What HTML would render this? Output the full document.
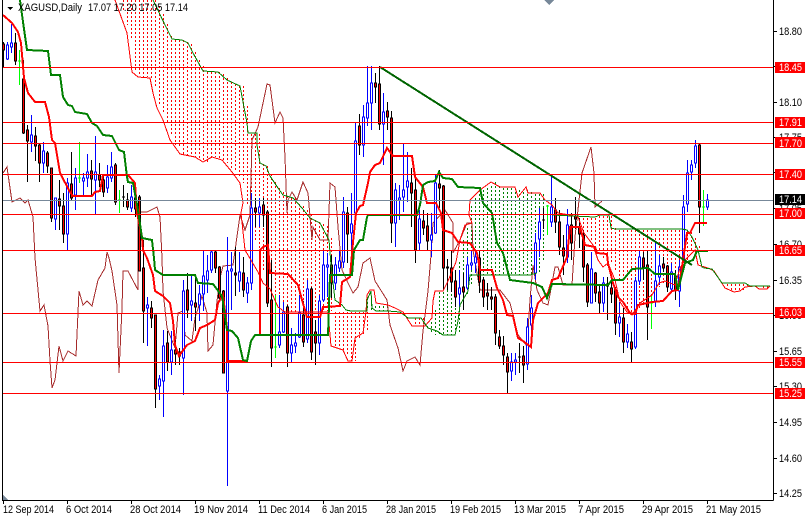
<!DOCTYPE html>
<html>
<head>
<meta charset="utf-8">
<title>XAGUSD Daily</title>
<style>
html,body{margin:0;padding:0;background:#fff;width:807px;height:518px;overflow:hidden}
svg{display:block}
text{font-family:"Liberation Sans",sans-serif;font-size:11px;fill:#000}
.w text,text.w{fill:#fff}
</style>
</head>
<body>
<svg width="807" height="518" viewBox="0 0 807 518" xmlns="http://www.w3.org/2000/svg" shape-rendering="crispEdges">
<rect width="807" height="518" fill="#fff"/>
<!-- cloud dashes -->
<g transform="translate(3.5,0)" fill="none" stroke-width="1" stroke-dasharray="2 2">
<path stroke="#f00" d="M120 0V12M124 0V25M128 0V40M132 0V72M136 0V76M140 0V77M144 0V77M148 0V78M152 0V88M156 6V105M160 14V114M164 24V122M168 36V134M172 40V145M176 40V148M180 40V154M184 42V155M188 44V155M192 52V157M196 60V158M200 66V160M204 72V162M208 72V160M212 72V157M216 72V158M220 74V160M224 78V163M228 82V168M232 84V172M236 86V178M240 86V183M244 106V205M248 134V215M252 134V240M256 134V260M260 164V272M264 166V285M268 174V295M272 182V300M276 188V305M280 192V308M284 196V312M288 198V312M292 198V312M296 204V311M300 206V311M304 210V311M308 214V311M312 220V311M316 222V311M320 224V311M324 226V311M328 238V311M332 312V347M336 312V348M340 312V350M344 312V355M348 312V361M352 312V361M356 312V338M360 312V335M364 312V330M412 318V324M416 318V326M420 318V326M580 218V233M584 218V233M588 218V240M592 218V245M596 216V250M600 216V260M604 216V266M608 216V264M612 228V270M616 230V282M620 230V302M624 230V308M628 230V313M632 230V315M636 230V310M640 230V303M644 230V302M648 230V296M652 230V295M656 230V287M660 230V283M664 230V281M668 230V282M672 230V283M676 230V285M680 230V268M684 230V260M688 232V250M692 238V250M696 246V250M724 284V287M728 284V290M732 284V292M736 284V292M740 284V291M744 284V288M760 286V289M764 286V289"/>
<path stroke="#008000" d="M364 298V310M368 304V310M372 306V311M376 306V311M380 306V311M384 306V311M424 326V330M428 322V333M432 310V335M436 292V335M440 292V335M444 290V335M448 282V335M452 272V335M456 262V333M460 240V305M464 228V295M468 206V285M472 198V265M476 194V270M480 190V275M484 188V275M488 186V275M492 182V275M496 186V275M500 188V275M504 188V275M508 188V275M512 188V275M516 190V275M520 192V275M524 190V275M528 192V275M532 194V273M536 194V273M540 194V260M544 206V235"/>
</g>
<!-- chikou -->
<polyline fill="none" stroke="#a52a2a" stroke-width="1" points="3,173 7,167 12,202 20,198 25,203 28,200 33,217 35,258 40,311 44,305 48,326 50,361 52,388 55,380 59,346 63,361 68,351 76,356 79,291 83,305 87,301 92,306 98,280 105,268 107,252 109,258 112,271 117,305 119,373 122,308 123,271 128,271 138,290 138,212 147,212 157,207 160,217 162,258 163,291 167,328 175,348 178,313 183,311 185,335 192,341 195,318 202,296 207,313 208,351 213,345 217,301 220,278 223,266 233,265 240,215 245,230 250,215 252,140 258,127 267,84 270,85 275,123 280,112 283,118 285,157 287,213 288,200 292,192 297,200 303,182 308,193 312,240 313,227 320,240 328,240 330,183 335,187 338,227 342,270 348,283 353,293 358,287 363,263 370,258 375,281 387,300 390,325 398,348 403,371 407,361 415,357 420,365 423,331 428,291 431,255 433,223 445,210 453,223 453,253 460,240 467,223 472,223 473,250 480,290 500,290 510,303 518,335 527,346 530,300 533,265 537,290 543,303 548,305 555,267 558,267 563,285 572,285 575,237 582,173 591,147 594,173 595,207 602,201"/>
<!-- wicks -->
<g fill="none" stroke-width="1">
<path stroke="#000" d="M3.5 42V68M15.5 33V65M23.5 60V134M27.5 125V182M35.5 127V161M39.5 144V182M47.5 151V173M51.5 168V222M59.5 180V230M63.5 193V243M71.5 152V200M91.5 160V195M99.5 163V187M103.5 175V197M115.5 163V205M123.5 185V207M127.5 193V210M135.5 190V217M139.5 195V271M143.5 240V343M151.5 301V328M155.5 315V408M167.5 331V371M175.5 340V365M179.5 348V365M187.5 273V318M195.5 275V331M215.5 250V273M219.5 266V301M223.5 290V373M235.5 247V296M243.5 257V297M255.5 198V227M263.5 198V227M267.5 210V307M271.5 260V367M287.5 305V367M303.5 301V347M311.5 287V360M315.5 320V365M331.5 255V298M347.5 207V263M359.5 114V155M375.5 73V103M379.5 66V130M387.5 102V130M391.5 111V243M411.5 168V227M415.5 175V263M423.5 210V235M427.5 213V250M439.5 170V208M443.5 185V290M447.5 259V290M451.5 250V292M455.5 270V307M463.5 273V310M479.5 250V293M483.5 277V307M487.5 283V310M491.5 287V310M495.5 294V345M499.5 330V349M503.5 336V365M507.5 353V393M519.5 343V373M523.5 346V383M543.5 208V229M555.5 198V233M559.5 210V255M563.5 235V275M571.5 213V260M575.5 197V229M579.5 218V248M583.5 230V282M587.5 263V307M595.5 272V302M599.5 285V313M607.5 277V320M611.5 282V303M615.5 287V335M623.5 308V353M631.5 332V362M643.5 252V280M647.5 250V340M663.5 257V272M667.5 265V292M675.5 270V300M699.5 144V233"/>
<path stroke="#00f" d="M7.5 42V60M11.5 24V53M31.5 115V152M43.5 142V173M55.5 198V230M67.5 178V250M75.5 168V210M83.5 173V195M87.5 154V187M95.5 136V215M107.5 165V193M111.5 152V182M131.5 185V212M147.5 297V346M159.5 375V400M163.5 330V417M171.5 331V375M183.5 280V395M191.5 275V321M199.5 285V321M203.5 250V311M207.5 255V293M211.5 250V273M227.5 237V486M231.5 252V310M239.5 252V292M247.5 277V303M251.5 193V290M259.5 198V227M279.5 295V348M283.5 302V333M291.5 328V362M295.5 333V353M299.5 295V338M307.5 280V343M319.5 295V355M323.5 250V302M327.5 253V297M335.5 257V290M339.5 250V272M343.5 197V268M351.5 193V250M355.5 122V225M363.5 105V157M367.5 66V126M371.5 66V130M383.5 93V165M395.5 183V247M399.5 185V220M403.5 144V212M407.5 152V202M419.5 210V250M431.5 213V257M435.5 175V234M459.5 270V310M467.5 257V290M471.5 250V270M475.5 250V273M511.5 353V381M515.5 353V375M527.5 318V370M531.5 295V345M535.5 233V280M539.5 208V257M551.5 177V227M567.5 209V263M591.5 252V303M603.5 277V312M619.5 302V337M627.5 324V348M635.5 277V349M639.5 250V285M655.5 243V307M659.5 255V285M671.5 263V293M679.5 260V307M683.5 195V270M687.5 160V212M691.5 160V180M695.5 140V168M707.5 194V210"/>
<path stroke="#0f0" d="M19.5 50V85M79.5 142V183M119.5 190V213M275.5 295V358M547.5 205V235M651.5 295V329M703.5 190V226"/>
<path stroke="#0f0" d="M18 61h3M78 178h3M118 200h3M274 347h3M546 206h3M650 303h3M702 207h3"/>
<path stroke="#000" d="M122 197h3M518 357h3M542 220h3"/>
</g>
<!-- bear bodies -->
<path fill="#f00" stroke="#000" stroke-width="1" d="M2.5 44h2v6h-2zM14.5 43h2v18h-2zM22.5 79h2v54h-2zM26.5 130h2v11h-2zM34.5 136h2v10h-2zM38.5 145h2v18h-2zM46.5 153h2v13h-2zM50.5 168h2v50h-2zM58.5 199h2v7h-2zM62.5 206h2v28h-2zM70.5 184h2v14h-2zM90.5 171h2v8h-2zM98.5 175h2v5h-2zM102.5 180h2v12h-2zM114.5 165h2v37h-2zM126.5 200h2v7h-2zM134.5 198h2v11h-2zM138.5 197h2v74h-2zM142.5 268h2v43h-2zM150.5 308h2v10h-2zM154.5 315h2v74h-2zM166.5 343h2v19h-2zM174.5 350h2v4h-2zM178.5 352h2v4h-2zM186.5 290h2v20h-2zM194.5 303h2v4h-2zM214.5 252h2v16h-2zM218.5 267h2v31h-2zM222.5 291h2v82h-2zM234.5 273h2v2h-2zM242.5 273h2v17h-2zM254.5 208h2v4h-2zM262.5 205h2v10h-2zM266.5 212h2v91h-2zM270.5 300h2v48h-2zM286.5 307h2v46h-2zM302.5 315h2v27h-2zM310.5 289h2v63h-2zM314.5 332h2v11h-2zM330.5 265h2v18h-2zM346.5 213h2v21h-2zM358.5 126h2v19h-2zM374.5 83h2v4h-2zM378.5 84h2v40h-2zM386.5 111h2v6h-2zM390.5 118h2v105h-2zM410.5 183h2v10h-2zM414.5 190h2v60h-2zM422.5 221h2v7h-2zM426.5 226h2v15h-2zM438.5 184h2v4h-2zM442.5 186h2v82h-2zM446.5 267h2v1h-2zM450.5 268h2v14h-2zM454.5 281h2v16h-2zM462.5 287h2v5h-2zM478.5 258h2v24h-2zM482.5 280h2v17h-2zM486.5 293h2v3h-2zM490.5 297h2v2h-2zM494.5 297h2v36h-2zM498.5 337h2v9h-2zM502.5 346h2v9h-2zM506.5 357h2v15h-2zM522.5 356h2v9h-2zM554.5 210h2v12h-2zM558.5 222h2v25h-2zM562.5 248h2v8h-2zM570.5 225h2v18h-2zM574.5 217h2v2h-2zM578.5 227h2v7h-2zM582.5 235h2v32h-2zM586.5 265h2v37h-2zM594.5 273h2v20h-2zM598.5 292h2v11h-2zM606.5 284h2v2h-2zM610.5 288h2v6h-2zM614.5 290h2v33h-2zM622.5 318h2v24h-2zM630.5 342h2v7h-2zM642.5 258h2v9h-2zM646.5 265h2v42h-2zM662.5 264h2v4h-2zM666.5 266h2v21h-2zM674.5 276h2v14h-2zM698.5 145h2v62h-2z"/>
<!-- bull bodies -->
<path fill="#fff" stroke="#00f" stroke-width="1" d="M6.5 45h2v14h-2zM10.5 43h2v4h-2zM30.5 135h2v7h-2zM42.5 151h2v12h-2zM54.5 198h2v21h-2zM66.5 183h2v51h-2zM74.5 178h2v17h-2zM82.5 178h2v3h-2zM86.5 172h2v6h-2zM94.5 172h2v8h-2zM106.5 177h2v11h-2zM110.5 167h2v11h-2zM130.5 197h2v11h-2zM146.5 305h2v3h-2zM158.5 379h2v7h-2zM162.5 346h2v35h-2zM170.5 350h2v12h-2zM182.5 291h2v67h-2zM190.5 301h2v4h-2zM198.5 294h2v11h-2zM202.5 276h2v18h-2zM206.5 271h2v9h-2zM210.5 252h2v18h-2zM226.5 271h2v120h-2zM230.5 269h2v2h-2zM238.5 272h2v9h-2zM246.5 283h2v10h-2zM250.5 208h2v75h-2zM258.5 207h2v6h-2zM278.5 332h2v13h-2zM282.5 312h2v20h-2zM290.5 345h2v8h-2zM294.5 343h2v3h-2zM298.5 313h2v24h-2zM306.5 289h2v50h-2zM318.5 301h2v42h-2zM322.5 265h2v35h-2zM326.5 265h2v2h-2zM334.5 265h2v18h-2zM338.5 261h2v7h-2zM342.5 212h2v50h-2zM350.5 224h2v9h-2zM354.5 141h2v72h-2zM362.5 117h2v28h-2zM366.5 103h2v15h-2zM370.5 83h2v20h-2zM382.5 112h2v12h-2zM394.5 190h2v33h-2zM398.5 198h2v2h-2zM402.5 190h2v7h-2zM406.5 181h2v6h-2zM418.5 219h2v24h-2zM430.5 235h2v5h-2zM434.5 183h2v50h-2zM458.5 288h2v6h-2zM466.5 265h2v23h-2zM470.5 263h2v2h-2zM474.5 257h2v6h-2zM510.5 362h2v9h-2zM514.5 360h2v2h-2zM526.5 327h2v37h-2zM530.5 308h2v17h-2zM534.5 243h2v30h-2zM538.5 222h2v17h-2zM550.5 207h2v15h-2zM566.5 225h2v32h-2zM590.5 269h2v34h-2zM602.5 283h2v20h-2zM618.5 317h2v6h-2zM626.5 334h2v8h-2zM634.5 281h2v66h-2zM638.5 257h2v24h-2zM654.5 281h2v21h-2zM658.5 266h2v11h-2zM670.5 272h2v17h-2zM678.5 267h2v24h-2zM682.5 207h2v60h-2zM686.5 173h2v31h-2zM690.5 165h2v7h-2zM694.5 146h2v17h-2zM706.5 200h2v7h-2z"/>
<!-- span lines -->
<polyline fill="none" stroke="#f00" stroke-width="1" points="115,0 127,33 132,72 138,77 150,78 153,93 157,108 163,120 170,140 180,154 195,157 203,162 212,157 222,160 232,172 240,183 243,203 241,213 245,250 258,272 263,283 270,289 278,307 285,312 328,312 331,346 343,350 348,361 352,361 355,338 363,333 366,312 367,295 370,290 374,290 376,303 388,305 395,308 403,312 412,326 425,326 432,318 433,301 435,291 443,291 448,281 456,262 460,240 465,225 472,223 469,215 470,200 480,190 491,182 500,187 515,187 518,197 526,187 528,193 540,193 545,200 552,205 558,213 570,215 578,217 584,233 593,245 598,260 603,267 608,263 615,280 620,302 627,312 632,315 640,303 652,295 659,283 665,281 675,285 680,268 685,260 695,250 698,265 708,268 714,271 725,288 734,292 740,291 745,287 755,286 759,289 767,289 770,286"/>
<polyline fill="none" stroke="#008000" stroke-width="1" points="153,0 166,27 172,39 182,40 188,43 193,53 203,71 218,72 227,80 240,86 247,123 248,133 257,133 257,145 260,163 266,166 270,176 278,188 283,195 293,198 302,208 310,218 320,223 329,240 331,265 335,300 342,305 346,310 351,311 367,311 367,300 371,291 372,308 376,311 388,311 400,312 408,318 421,318 428,328 437,331 443,335 455,335 458,321 460,305 468,291 470,275 480,275 530,275 537,273"/>
<polyline fill="none" stroke="#008000" stroke-width="1" points="552,215 595,217 600,215 609,215 611,228 615,229 682,229 687,230 692,237 698,250 702,267 704,268 712,269 722,283 745,283 750,286 770,286"/>
<!-- tenkan -->
<polyline fill="none" stroke="#f00" stroke-width="2" points="3,15 12,23 18,32 21,43 24,78 28,93 35,102 45,102 49,117 52,140 55,143 60,173 70,192 73,196 92,196 95,192 100,191 103,175 128,175 135,183 137,213 142,237 143,250 147,258 153,275 155,291 163,296 170,303 173,321 175,345 179,356 187,345 195,341 200,328 207,325 215,320 218,303 223,295 227,328 227,361 247,361 251,341 255,335 260,335 260,250 263,247 268,245 270,273 288,274 298,285 302,300 307,317 320,317 323,307 340,306 342,282 350,277 353,242 356,213 360,206 363,205 368,183 370,172 375,165 380,163 387,148 393,156 412,156 415,177 423,187 427,203 436,203 441,213 443,230 452,233 458,242 470,243 477,253 480,270 492,270 497,288 503,300 507,315 513,316 518,338 523,341 531,347 533,320 538,303 548,293 552,280 558,278 567,257 570,227 580,227 585,245 595,247 597,253 607,254 608,263 613,283 618,297 623,302 630,313 635,314 638,305 652,302 663,301 672,291 678,290 682,267 687,233 690,233 695,223 707,223"/>
<!-- kijun -->
<polyline fill="none" stroke="#008000" stroke-width="2" points="20,0 23,22 27,50 48,51 51,75 60,75 63,97 68,105 72,106 75,112 87,114 92,123 97,126 103,135 112,136 119,150 124,152 127,177 128,182 133,183 138,210 142,238 152,240 154,258 155,270 163,275 195,275 198,283 213,284 222,296 227,330 232,331 238,338 243,360 247,361 251,341 255,335 328,335 330,275 352,275 354,250 360,240 363,240 367,217 368,215 417,215 420,205 423,185 428,182 435,181 439,172 443,178 452,179 458,187 480,188 483,203 492,213 497,243 503,253 510,280 533,283 542,287 547,298 552,284 608,285 612,280 623,280 632,269 648,268 655,274 675,274 678,290 685,263 693,260 697,251 708,251"/>
<!-- trendline -->
<line x1="380" y1="67" x2="692" y2="265" stroke="#006400" stroke-width="2"/>
<!-- horizontal lines -->
<g stroke="#f00" stroke-width="1">
<path d="M3 67.5H773M3 122.5H773M3 143.5H773M3 174.5H773M3 214.5H773M3 250.5H773M3 313.5H773M3 362.5H773M3 393.5H773"/>
</g>
<path d="M3 200.5H773" stroke="#778899" stroke-width="1"/>
<!-- axes -->
<path d="M2.5 0V500.5H773.5M773.5 0V500.5" fill="none" stroke="#000" stroke-width="1"/>
<path d="M774 31.5h3M774 66.5h3M774 102.5h3M774 137.5h3M774 172.5h3M774 208.5h3M774 244.5h3M774 280.5h3M774 315.5h3M774 351.5h3M774 386.5h3M774 422.5h3M774 458.5h3M774 493.5h3M3.5 501v3M67.5 501v3M131.5 501v3M195.5 501v3M259.5 501v3M323.5 501v3M387.5 501v3M451.5 501v3M515.5 501v3M579.5 501v3M643.5 501v3M707.5 501v3" stroke="#000" stroke-width="1" fill="none"/>
<!-- gray markers -->
<path d="M3 495L8 500H3z" fill="#778899"/>
<path d="M544 0H554L549 5z" fill="#778899"/>
<path d="M7 7H13L10 10z" fill="#000"/>
<!-- title -->
<text x="18" y="11" textLength="64" lengthAdjust="spacingAndGlyphs">XAGUSD,Daily</text>
<text x="88" y="11" textLength="100" lengthAdjust="spacingAndGlyphs">17.07 17.20 17.05 17.14</text>
<!-- price axis labels -->
<g>
<text x="779" y="35" textLength="23" lengthAdjust="spacingAndGlyphs">18.80</text>
<text x="779" y="106" textLength="23" lengthAdjust="spacingAndGlyphs">18.10</text>
<text x="779" y="141" textLength="23" lengthAdjust="spacingAndGlyphs">17.75</text>
<text x="779" y="212" textLength="23" lengthAdjust="spacingAndGlyphs">17.05</text>
<text x="779" y="248" textLength="23" lengthAdjust="spacingAndGlyphs">16.70</text>
<text x="779" y="284" textLength="23" lengthAdjust="spacingAndGlyphs">16.35</text>
<text x="779" y="319" textLength="23" lengthAdjust="spacingAndGlyphs">16.00</text>
<text x="779" y="355" textLength="23" lengthAdjust="spacingAndGlyphs">15.65</text>
<text x="779" y="390" textLength="23" lengthAdjust="spacingAndGlyphs">15.30</text>
<text x="779" y="426" textLength="23" lengthAdjust="spacingAndGlyphs">14.95</text>
<text x="779" y="462" textLength="23" lengthAdjust="spacingAndGlyphs">14.60</text>
<text x="779" y="497" textLength="23" lengthAdjust="spacingAndGlyphs">14.25</text>
</g>
<!-- price tags -->
<g fill="#f00">
<rect x="775" y="62" width="30" height="11"/>
<rect x="775" y="117" width="30" height="11"/>
<rect x="775" y="137" width="30" height="11"/>
<rect x="775" y="169" width="30" height="11"/>
<rect x="775" y="208" width="30" height="11"/>
<rect x="775" y="245" width="30" height="11"/>
<rect x="775" y="307" width="30" height="11"/>
<rect x="775" y="357" width="30" height="11"/>
<rect x="775" y="388" width="30" height="11"/>
</g>
<rect x="775" y="194" width="30" height="11" fill="#000"/>
<g class="w">
<text x="779" y="71" textLength="23" lengthAdjust="spacingAndGlyphs">18.45</text>
<text x="779" y="126" textLength="23" lengthAdjust="spacingAndGlyphs">17.91</text>
<text x="779" y="147" textLength="23" lengthAdjust="spacingAndGlyphs">17.70</text>
<text x="779" y="178" textLength="23" lengthAdjust="spacingAndGlyphs">17.40</text>
<text x="779" y="203" textLength="23" lengthAdjust="spacingAndGlyphs">17.14</text>
<text x="779" y="217" textLength="23" lengthAdjust="spacingAndGlyphs">17.00</text>
<text x="779" y="254" textLength="23" lengthAdjust="spacingAndGlyphs">16.65</text>
<text x="779" y="316" textLength="23" lengthAdjust="spacingAndGlyphs">16.03</text>
<text x="779" y="366" textLength="23" lengthAdjust="spacingAndGlyphs">15.55</text>
<text x="779" y="397" textLength="23" lengthAdjust="spacingAndGlyphs">15.25</text>
</g>
<!-- date labels -->
<g>
<text x="3" y="513" textLength="51" lengthAdjust="spacingAndGlyphs">12 Sep 2014</text>
<text x="66" y="513" textLength="46" lengthAdjust="spacingAndGlyphs">6 Oct 2014</text>
<text x="130" y="513" textLength="51" lengthAdjust="spacingAndGlyphs">28 Oct 2014</text>
<text x="194" y="513" textLength="54" lengthAdjust="spacingAndGlyphs">19 Nov 2014</text>
<text x="258" y="513" textLength="52" lengthAdjust="spacingAndGlyphs">11 Dec 2014</text>
<text x="322" y="513" textLength="45" lengthAdjust="spacingAndGlyphs">6 Jan 2015</text>
<text x="386" y="513" textLength="50" lengthAdjust="spacingAndGlyphs">28 Jan 2015</text>
<text x="450" y="513" textLength="51" lengthAdjust="spacingAndGlyphs">19 Feb 2015</text>
<text x="514" y="513" textLength="52" lengthAdjust="spacingAndGlyphs">13 Mar 2015</text>
<text x="578" y="513" textLength="46" lengthAdjust="spacingAndGlyphs">7 Apr 2015</text>
<text x="642" y="513" textLength="51" lengthAdjust="spacingAndGlyphs">29 Apr 2015</text>
<text x="706" y="513" textLength="55" lengthAdjust="spacingAndGlyphs">21 May 2015</text>
</g>
</svg>
</body>
</html>
